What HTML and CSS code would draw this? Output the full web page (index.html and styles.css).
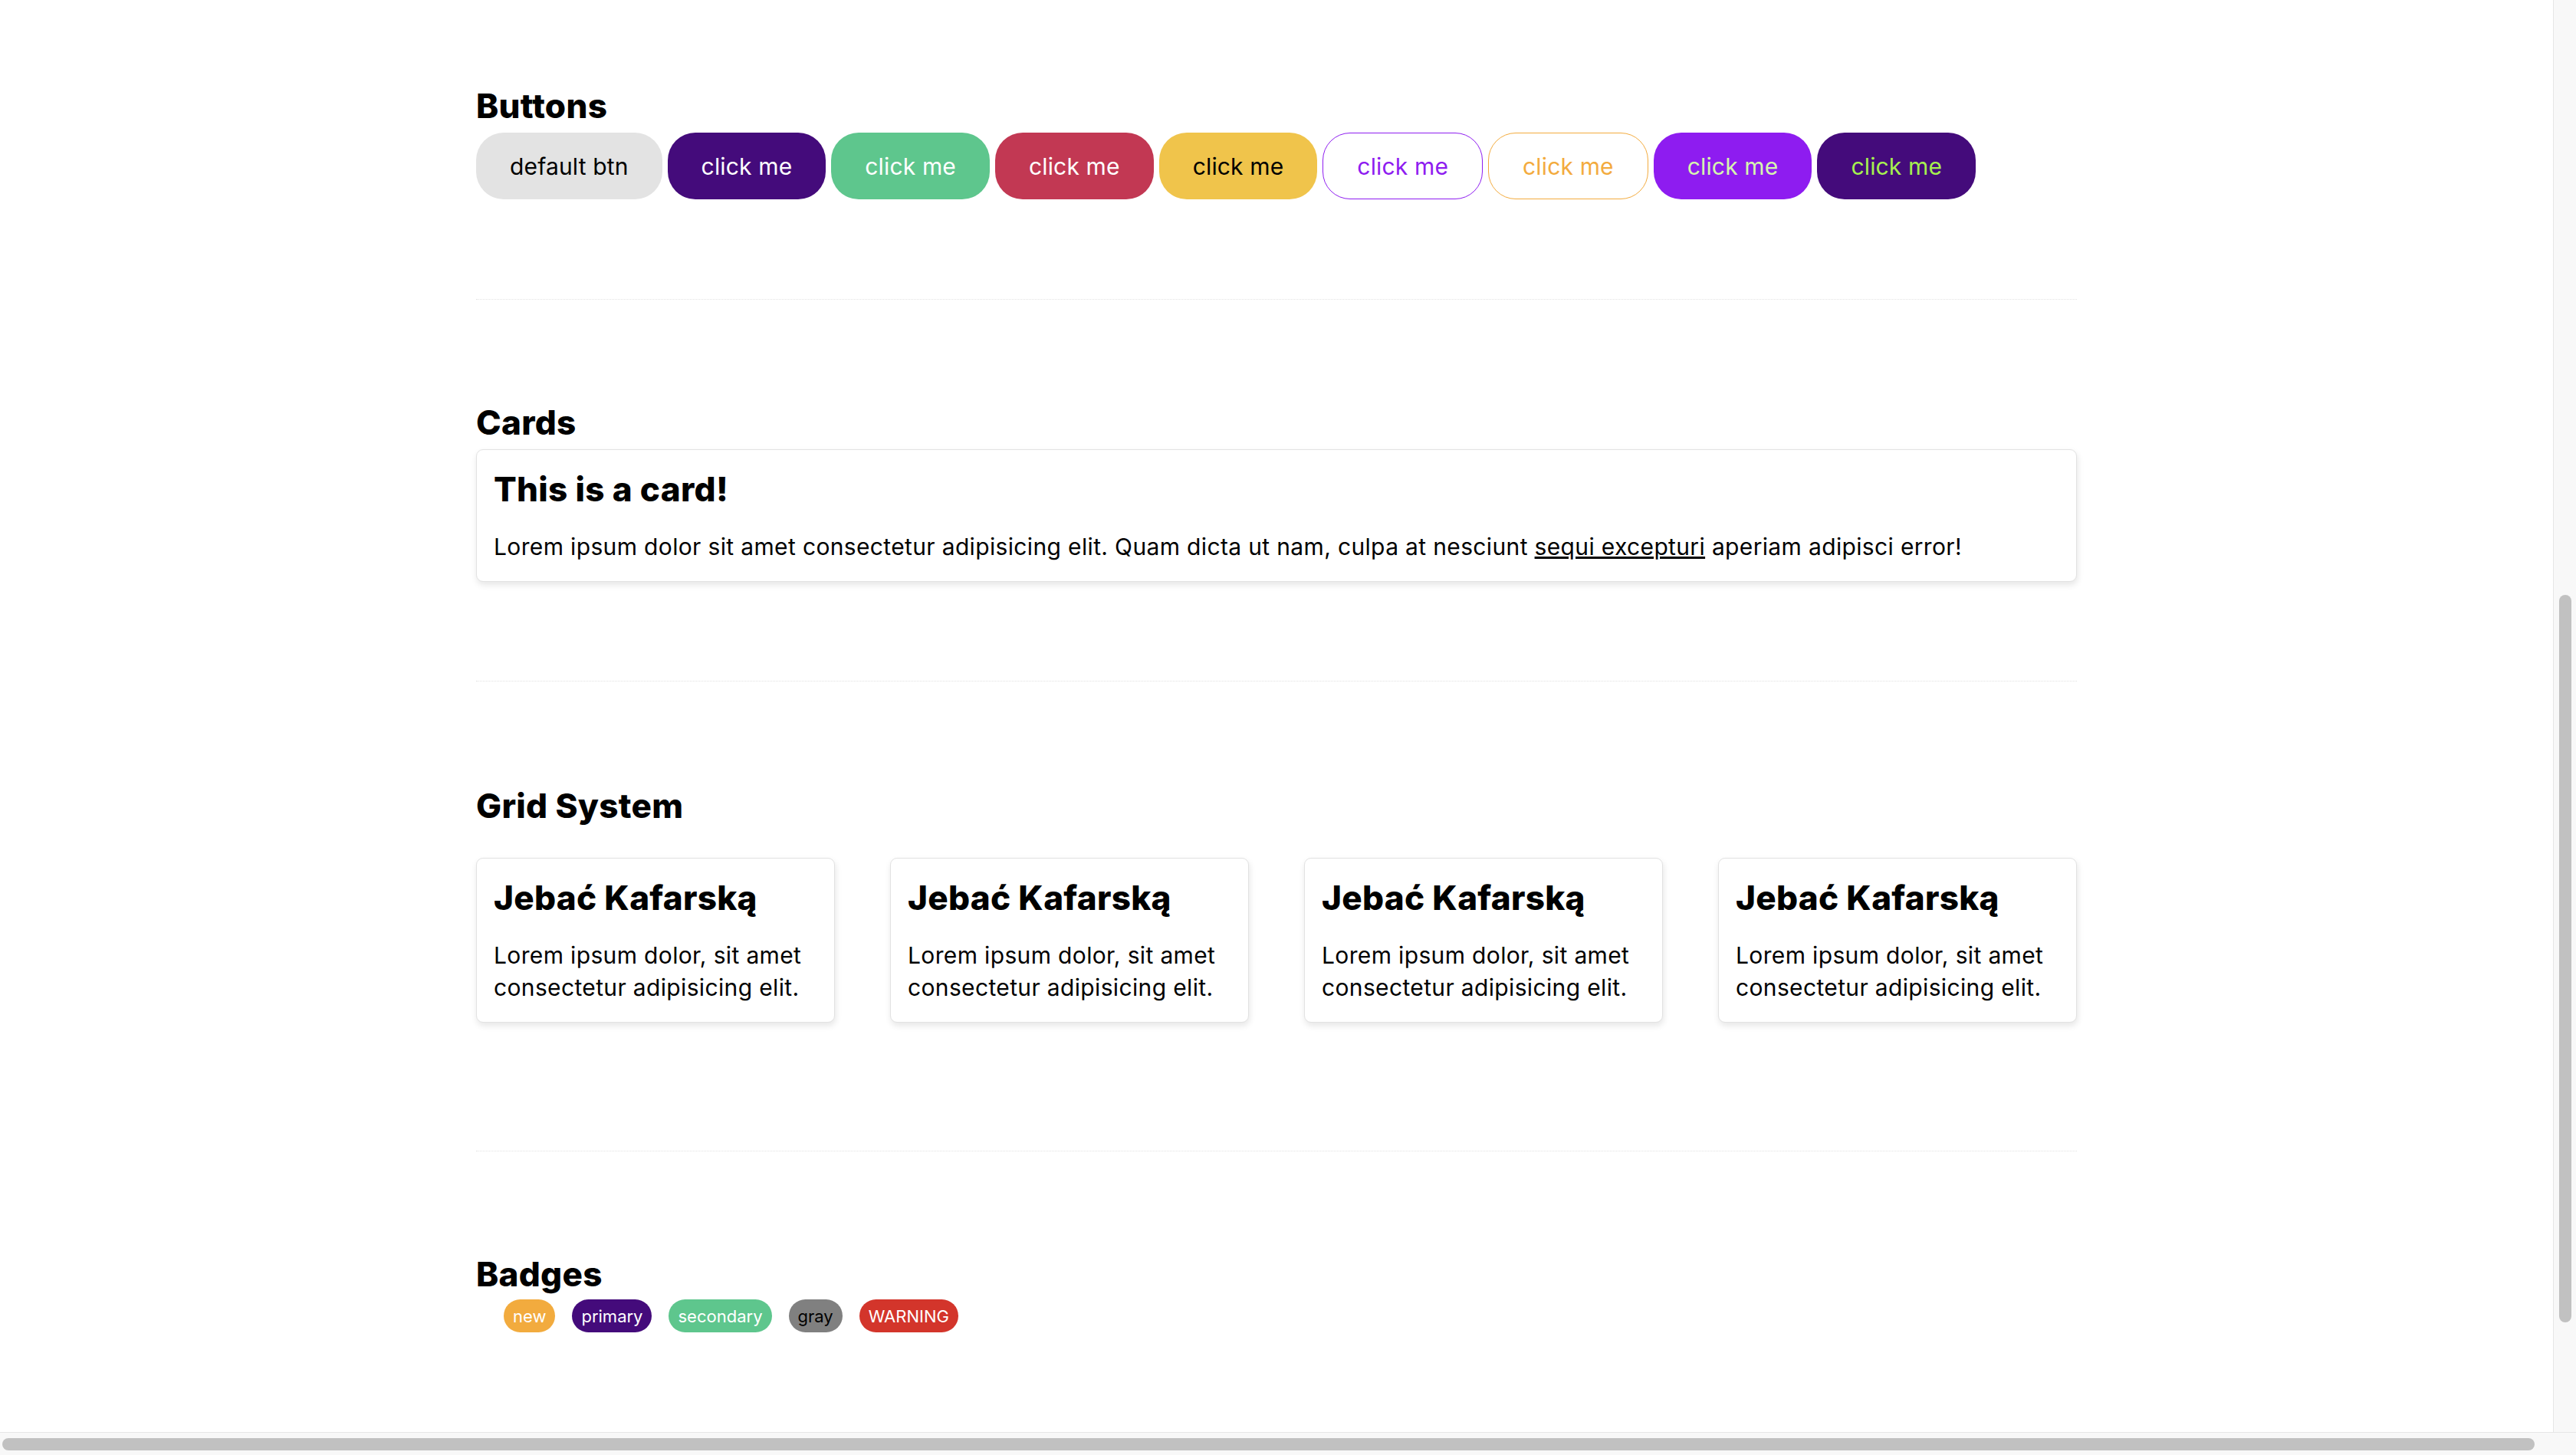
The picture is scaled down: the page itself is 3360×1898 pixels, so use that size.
FILE: index.html
```html
<!DOCTYPE html>
<html lang="en">
<head>
<meta charset="utf-8">
<title>UI Kit</title>
<link rel="stylesheet" href="styles.css">
</head>
<body>
<div class="page">
  <main class="container">
    <section class="section section-buttons">
      <h2 class="section-title">Buttons</h2>
      <div class="btn-row">
        <button class="btn btn-default">default btn</button>
        <button class="btn btn-primary">click me</button>
        <button class="btn btn-secondary">click me</button>
        <button class="btn btn-danger">click me</button>
        <button class="btn btn-warning">click me</button>
        <button class="btn btn-outline-purple">click me</button>
        <button class="btn btn-outline-orange">click me</button>
        <button class="btn btn-violet">click me</button>
        <button class="btn btn-dark">click me</button>
      </div>
    </section>
    <hr class="divider divider-1">
    <section class="section section-cards">
      <h2 class="section-title">Cards</h2>
      <div class="card card-wide">
        <h3 class="card-title">This is a card!</h3>
        <p class="card-text">Lorem ipsum dolor sit amet consectetur adipisicing elit. Quam dicta ut nam, culpa at nesciunt <a href="#" class="card-link">sequi excepturi</a> aperiam adipisci error!</p>
      </div>
    </section>
    <hr class="divider divider-2">
    <section class="section section-grid">
      <h2 class="section-title">Grid System</h2>
      <div class="grid">
        <div class="card">
          <h3 class="card-title">Jebać Kafarską</h3>
          <p class="card-text">Lorem ipsum dolor, sit amet consectetur adipisicing elit.</p>
        </div>
        <div class="card">
          <h3 class="card-title">Jebać Kafarską</h3>
          <p class="card-text">Lorem ipsum dolor, sit amet consectetur adipisicing elit.</p>
        </div>
        <div class="card">
          <h3 class="card-title">Jebać Kafarską</h3>
          <p class="card-text">Lorem ipsum dolor, sit amet consectetur adipisicing elit.</p>
        </div>
        <div class="card">
          <h3 class="card-title">Jebać Kafarską</h3>
          <p class="card-text">Lorem ipsum dolor, sit amet consectetur adipisicing elit.</p>
        </div>
      </div>
    </section>
    <hr class="divider divider-3">
    <section class="section section-badges">
      <h2 class="section-title">Badges</h2>
      <div class="badge-row">
        <span class="badge badge-new">new</span>
        <span class="badge badge-primary">primary</span>
        <span class="badge badge-secondary">secondary</span>
        <span class="badge badge-gray">gray</span>
        <span class="badge badge-warning">WARNING</span>
      </div>
    </section>
  </main>
</div>
<div class="scrollbar-v"><div class="scrollbar-v-thumb"></div></div>
<div class="scrollbar-h"><div class="scrollbar-h-thumb"></div></div>
</body>
</html>
```

FILE: styles.css
```css
html, body {
  margin: 0;
  padding: 0;
  background: #ffffff;
  overflow: hidden;
}

body {
  font-family: "Inter", "Noto Sans", sans-serif;
  color: #000;
  width: 3360px;
  height: 1898px;
}

.page {
  width: 3330px;
}

.container {
  width: 2088px;
  margin: 0 auto;
  padding-top: 111px;
}

.section-title {
  margin: 0;
  font-size: 44px;
  line-height: 54px;
  font-weight: 800;
  letter-spacing: 0.3px;
}

/* Buttons */
.btn-row {
  margin-top: 8px;
  display: flex;
  gap: 7px;
}

.btn {
  font-family: inherit;
  font-size: 30px;
  letter-spacing: 0.15px;
  height: 87px;
  padding: 0 44px;
  border: 0;
  border-radius: 36px;
  background: #e3e3e3;
  color: #000;
  display: inline-flex;
  align-items: center;
  justify-content: center;
  cursor: pointer;
}

.btn-default { padding: 0 44px; }
.btn-primary { background: #440b7b; color: #fff; }
.btn-secondary { background: #5ec68d; color: #fff; }
.btn-danger { background: #c23853; color: #fff; }
.btn-warning { background: #f0c44b; color: #000; }
.btn-outline-purple { background: #fff; color: #8e1cf0; border: 1.5px solid #8e1cf0; }
.btn-outline-orange { background: #fff; color: #f3ab3e; border: 1px solid #f3ab3e; }
.btn-violet { background: #8e1cf0; color: #d6f5ae; }
.btn-dark { background: #440b7b; color: #a6f04f; }

/* Dividers */
.divider {
  border: 0;
  height: 0;
  border-top: 1px dotted #e2e2e2;
  margin: 0;
}
.divider-1 { margin-top: 130px; }
.divider-2 { margin-top: 129px; }
.divider-3 { margin-top: 167px; }

.section-cards { margin-top: 133px; }
.section-grid { margin-top: 135px; }
.section-badges { margin-top: 133px; }

/* Cards */
.card {
  background: #fff;
  border: 1px solid #e2e2e2;
  border-radius: 9px;
  box-shadow: 1px 4px 8px rgba(0, 0, 0, 0.1);
  padding: 24px 22px 24px 22px;
}

.card-wide {
  margin-top: 8px;
}

.card-title {
  margin: 0;
  font-size: 44px;
  line-height: 54px;
  font-weight: 800;
  letter-spacing: 0.3px;
}

.card-text {
  margin: 27px 0 0 0;
  font-size: 30px;
  line-height: 42px;
  letter-spacing: 0.35px;
}

.card-link {
  color: #000;
  text-decoration: underline;
}

.grid {
  margin-top: 41px;
  display: grid;
  grid-template-columns: repeat(4, 1fr);
  gap: 72px;
}

/* Badges */
.badge-row {
  margin-top: 6px;
  display: flex;
  gap: 22px;
  padding-left: 36px;
}

.badge {
  display: inline-flex;
  align-items: center;
  height: 43px;
  padding: 0 12px;
  border-radius: 22px;
  font-size: 22px;
  color: #fff;
}

.badge-new { background: #f2ab3e; }
.badge-primary { background: #440b7b; }
.badge-secondary { background: #5ec68d; }
.badge-gray { background: #808080; color: #000; }
.badge-warning { background: #d3352b; }

/* Fake browser scrollbars */
.scrollbar-v {
  position: fixed;
  top: 0;
  right: 0;
  width: 29px;
  height: 1868px;
  background: #f8f8f8;
  border-left: 1px solid #e6e6e6;
}

.scrollbar-v-thumb {
  position: absolute;
  left: 7px;
  top: 776px;
  width: 16px;
  height: 949px;
  border-radius: 8px;
  background: #c1c1c1;
}

.scrollbar-h {
  position: fixed;
  left: 0;
  bottom: 0;
  width: 3360px;
  height: 29px;
  background: #f8f8f8;
  border-top: 1px solid #e6e6e6;
}

.scrollbar-h-thumb {
  position: absolute;
  left: 3px;
  top: 7px;
  width: 3303px;
  height: 16px;
  border-radius: 8px;
  background: #c1c1c1;
}
```
